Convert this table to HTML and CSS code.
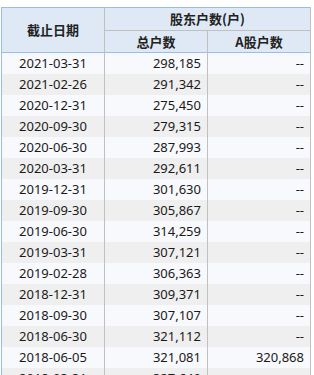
FILE: index.html
```html
<!DOCTYPE html>
<html>
<head>
<meta charset="utf-8">
<link rel="stylesheet" href="styles.css">
</head>
<body>
<div class="wrap">
<table class="grid">
<thead>
<tr class="h1">
<th rowspan="2" class="c1">截止日期</th>
<th colspan="2" class="grp">股东户数(户)</th>
</tr>
<tr class="h2">
<th>总户数</th>
<th>A股户数</th>
</tr>
</thead>
<tbody>
<tr><td class="d">2021-03-31</td><td>298,185</td><td>--</td></tr>
<tr><td class="d">2021-02-26</td><td>291,342</td><td>--</td></tr>
<tr><td class="d">2020-12-31</td><td>275,450</td><td>--</td></tr>
<tr><td class="d">2020-09-30</td><td>279,315</td><td>--</td></tr>
<tr><td class="d">2020-06-30</td><td>287,993</td><td>--</td></tr>
<tr><td class="d">2020-03-31</td><td>292,611</td><td>--</td></tr>
<tr><td class="d">2019-12-31</td><td>301,630</td><td>--</td></tr>
<tr><td class="d">2019-09-30</td><td>305,867</td><td>--</td></tr>
<tr><td class="d">2019-06-30</td><td>314,259</td><td>--</td></tr>
<tr><td class="d">2019-03-31</td><td>307,121</td><td>--</td></tr>
<tr><td class="d">2019-02-28</td><td>306,363</td><td>--</td></tr>
<tr><td class="d">2018-12-31</td><td>309,371</td><td>--</td></tr>
<tr><td class="d">2018-09-30</td><td>307,107</td><td>--</td></tr>
<tr><td class="d">2018-06-30</td><td>321,112</td><td>--</td></tr>
<tr><td class="d">2018-06-05</td><td>321,081</td><td>320,868</td></tr>
<tr><td class="d">2018-03-31</td><td>327,649</td><td>--</td></tr>
</tbody>
</table>
</div>
</body>
</html>
```
FILE: styles.css
```css
html, body {
  margin: 0;
  padding: 0;
  background: #ffffff;
}
.wrap {
  padding: 7px 0 0 1px;
}
.grid {
  border-collapse: collapse;
  table-layout: fixed;
  width: 310px;
  font-family: "Noto Sans", "Noto Sans CJK SC", sans-serif;
  font-size: 13px;
  color: #1a1a1a;
  border-left: 1px solid #99bce8;
  border-top: 1px solid #99bce8;
}
.grid th {
  background: #dfe9f6;
  font-weight: bold;
  font-family: "Noto Sans CJK SC", sans-serif;
  font-size: 13px;
  color: #222;
  border-right: 1px solid #c0c0c0;
  padding: 0;
  line-height: 20px;
}
.h1 th { height: 22px; }
.h1 .grp { border-bottom: 1px solid #c0c0c0; }
.h2 th { height: 21px; }
thead { border-bottom: 1px solid #99bce8; }
.grid td {
  height: 21px;
  padding: 0 6px 0 0;
  text-align: right;
  line-height: 21px;
  border-right: 1px solid #c0c0c0;
  white-space: nowrap;
}
.grid td.d {
  text-align: center;
  padding: 0;
}
tbody tr:nth-child(odd) { background: #f8f9fc; }
tbody tr:nth-child(even) { background: #efefef; }
```
